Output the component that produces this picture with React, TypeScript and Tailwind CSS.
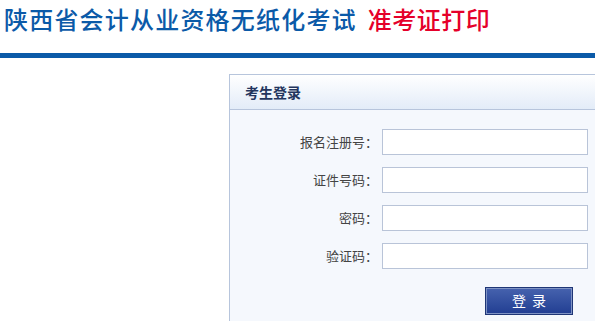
import React from "react";

const fields = ["报名注册号：", "证件号码：", "密码：", "验证码："];

const App = () => {
    return (
        <div className="w-[595px] h-[321px] overflow-hidden bg-white font-['SimSun','Noto_Sans_CJK_SC',sans-serif]">
            {/* Header */}
            <div className="h-[53px] pl-[4px] pt-[6px] flex items-start">
                <span className="text-[24px] leading-[26px] tracking-[1.2px] font-medium text-[#0b5aa8]">陕西省会计从业资格无纸化考试</span>
                <span className="ml-[11px] text-[24px] leading-[26px] tracking-[0.5px] font-medium text-[#e5002a]">准考证打印</span>
            </div>
            <div className="h-[5px] bg-[#0b5aa8]"></div>

            {/* Login panel */}
            <div className="pl-[229px] pt-[16px]">
                <div className="w-[380px] border-l border-t border-[#b7c5dc] bg-[#f5f8fd]">
                    <div className="h-[35px] flex items-center pl-[15px] border-b border-[#b7c5dc] bg-gradient-to-b from-white to-[#e3ecf8]">
                        <span className="text-[14px] font-bold text-[#23355e]">考生登录</span>
                    </div>
                    <div className="pt-[19px] flex flex-col gap-[12px]">
                        {fields.map((f) => (
                            <div key={f} className="flex items-center">
                                <label className="w-[148px] text-right text-[13px] text-[#444]">{f}</label>
                                <input className="ml-[4px] w-[206px] h-[26px] bg-white border border-[#b9c4d8] outline-none" />
                            </div>
                        ))}
                    </div>
                    <div className="pl-[256px] pt-[18px] pb-[10px]">
                        <button className="w-[86px] h-[26px] border border-[#7f93c4] outline outline-1 outline-[#1f3676] bg-gradient-to-b from-[#4561ad] to-[#233f93] text-white text-[14px] tracking-[6px] pl-[6px]">登录</button>
                    </div>
                </div>
            </div>
        </div>
    );
};

export default App;
